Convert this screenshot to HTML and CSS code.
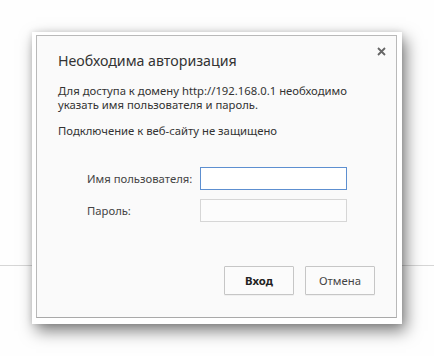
FILE: index.html
```html
<!DOCTYPE html>
<html lang="ru">

<head>
    <meta charset="UTF-8">
    <title>Необходима авторизация</title>
    <link rel="stylesheet" href="styles.css">
</head>

<body>
    <div class="page"></div>

    <div class="frame">
        <div class="dialog">
            <button class="close" title="Закрыть">
                <svg width="9" height="9" viewBox="0 0 9 9">
                    <path d="M1 1 L8 8 M8 1 L1 8" stroke="#666" stroke-width="1.8" fill="none" />
                </svg>
            </button>
            <h1>Необходима авторизация</h1>
            <p class="info">Для доступа к домену http://192.168.0.1 необходимо<br>указать имя пользователя и пароль.</p>
            <p class="warn">Подключение к веб-сайту не защищено</p>

            <div class="form">
                <label for="user">Имя пользователя:</label>
                <input type="text" id="user" class="focused">
                <label for="pass">Пароль:</label>
                <input type="password" id="pass">
            </div>

            <div class="buttons">
                <button class="btn primary">Вход</button>
                <button class="btn">Отмена</button>
            </div>
        </div>
    </div>
</body>

</html>
```

FILE: styles.css
```css
body {
    margin: 0;
    width: 434px;
    height: 356px;
    background-color: #fefefe;
    font-family: "Noto Sans", "Open Sans", sans-serif;
    color: #333;
    position: relative;
    overflow: hidden;
}

.page {
    height: 265px;
    border-bottom: 1px solid #d6d6d6;
}

.frame {
    position: absolute;
    left: 32px;
    top: 32px;
    width: 370px;
    height: 292px;
    background-color: #fff;
    box-shadow: 4px 7px 15px rgba(0, 0, 0, 0.5), 0 0 6px rgba(0, 0, 0, 0.12);
    padding: 3px 0 0 4px;
    box-sizing: border-box;
}

.dialog {
    position: relative;
    width: 361px;
    height: 283px;
    box-sizing: border-box;
    border: 1px solid #b9b9b9;
    border-bottom-color: #a9a9a9;
    background-color: #fafafa;
    padding: 15px 21px 0 21px;
}

.close {
    position: absolute;
    top: 10px;
    right: 9px;
    width: 11px;
    height: 11px;
    padding: 1px;
    border: none;
    background: none;
    display: flex;
}

h1 {
    margin: 0;
    font-size: 14.2px;
    font-weight: normal;
    line-height: 20px;
    color: #333;
}

.info {
    margin: 13px 0 0 0;
    font-size: 11.3px;
    line-height: 14px;
}

.warn {
    margin: 12px 0 0 0;
    font-size: 11.3px;
    line-height: 14px;
}

.form {
    display: grid;
    grid-template-columns: auto 147px;
    column-gap: 8px;
    row-gap: 9px;
    align-items: center;
    justify-content: start;
    margin: 29px 0 0 29px;
}

.form label {
    font-size: 11.3px;
    color: #444;
}

.form input {
    height: 23px;
    box-sizing: border-box;
    border: 1px solid #d6d6d6;
    background-color: #fcfcfc;
    margin: 0;
    padding: 2px 4px;
    outline: none;
}

.form input.focused {
    border-color: #5d8fd0;
    background-color: #fff;
}

.buttons {
    display: flex;
    justify-content: flex-end;
    gap: 11px;
    margin-top: 44px;
}

.btn {
    width: 70px;
    height: 29px;
    border: 1px solid #c6c6c6;
    border-radius: 1px;
    background-color: #fbfbfb;
    font-family: "Noto Sans", "Open Sans", sans-serif;
    font-size: 11.3px;
    color: #444;
    box-shadow: 0 1px 0 rgba(0, 0, 0, 0.04);
}

.btn.primary {
    font-weight: bold;
    color: #222;
}
```
